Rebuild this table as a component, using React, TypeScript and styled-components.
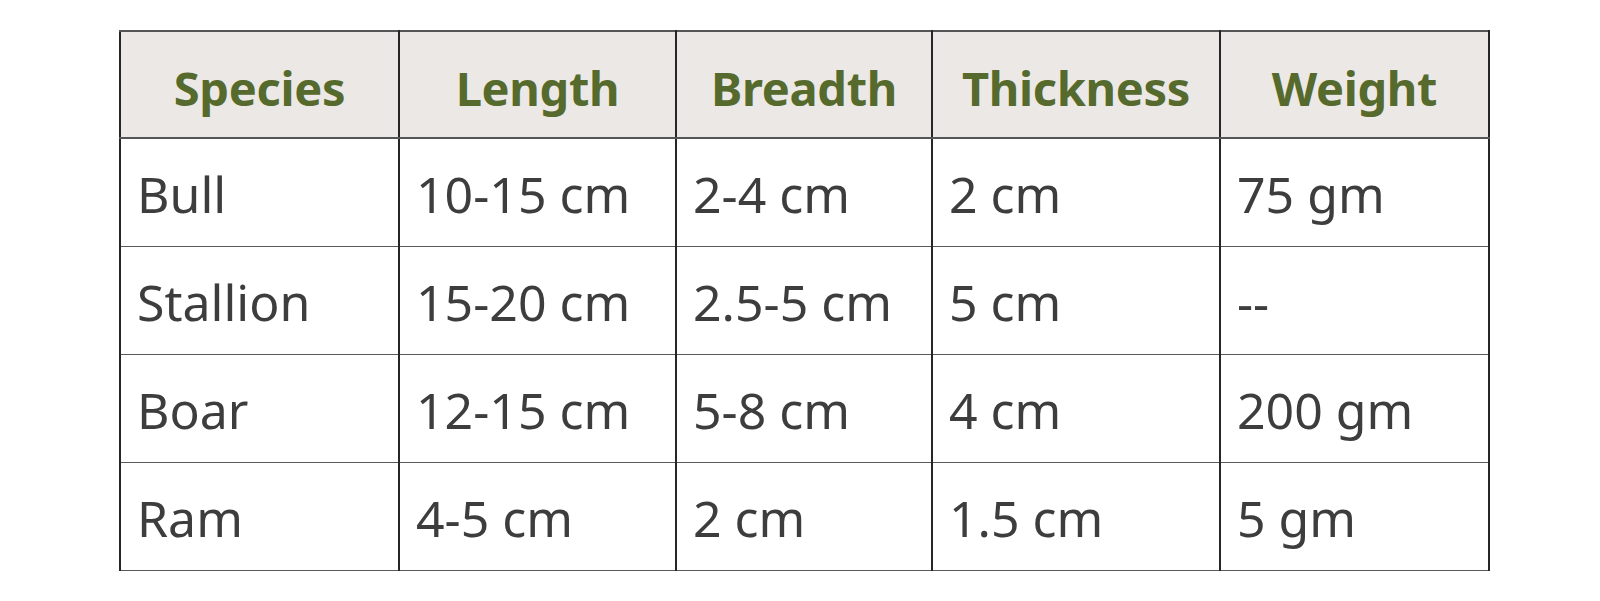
import React from "react";
import styled, { createGlobalStyle } from "styled-components";

const Global = createGlobalStyle`
  html, body { margin: 0; padding: 0; background: #ffffff; }
  body { font-family: "Noto Sans", "Open Sans", sans-serif; }
`;

const Page = styled.div`
  width: 1600px;
  height: 601px;
  padding: 30px 0 0 119px;
  box-sizing: border-box;
`;

const Table = styled.table`
  border-collapse: collapse;
  table-layout: fixed;
  width: 1369px;
  font-family: "Noto Sans", "Open Sans", sans-serif;
`;

const HeadCell = styled.th<{ $w: number }>`
  width: ${(p) => p.$w}px;
  height: 107px;
  box-sizing: border-box;
  background: #ebe8e6;
  color: #556a2c;
  font-weight: 700;
  font-size: 47px;
  letter-spacing: -0.3px;
  text-align: center;
  padding: 6px 0 0 0;
  border: 2px solid #262626;
  border-top-color: #555;
  border-bottom-color: #555;
`;

const Cell = styled.td`
  height: 108px;
  box-sizing: border-box;
  color: #3d3d3d;
  font-size: 50px;
  padding: 4px 0 0 16px;
  border: 2px solid #262626;
  border-top: 1.5px solid #5a5a5a;
  border-bottom: 1.5px solid #5a5a5a;
  white-space: nowrap;
`;

const cols = [
  { h: "Species", w: 279 },
  { h: "Length", w: 277 },
  { h: "Breadth", w: 256 },
  { h: "Thickness", w: 288 },
  { h: "Weight", w: 269 },
];

const rows = [
  ["Bull", "10-15 cm", "2-4 cm", "2 cm", "75 gm"],
  ["Stallion", "15-20 cm", "2.5-5 cm", "5 cm", "--"],
  ["Boar", "12-15 cm", "5-8 cm", "4 cm", "200 gm"],
  ["Ram", "4-5 cm", "2 cm", "1.5 cm", "5 gm"],
];

export default function App() {
  return (
    <Page>
      <Global />
      <Table>
        <thead>
          <tr>
            {cols.map((c) => (
              <HeadCell key={c.h} $w={c.w}>
                {c.h}
              </HeadCell>
            ))}
          </tr>
        </thead>
        <tbody>
          {rows.map((r) => (
            <tr key={r[0]}>
              {r.map((v, i) => (
                <Cell key={i}>{v}</Cell>
              ))}
            </tr>
          ))}
        </tbody>
      </Table>
    </Page>
  );
}
